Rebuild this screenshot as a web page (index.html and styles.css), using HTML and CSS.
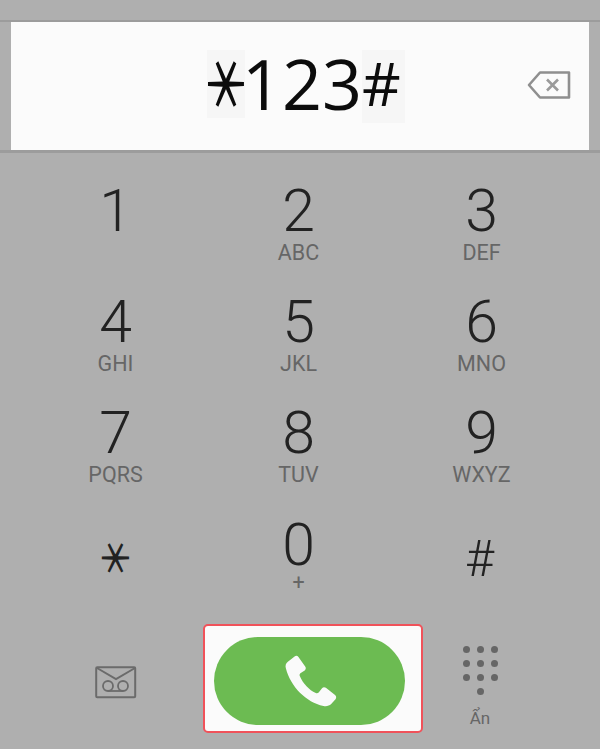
FILE: index.html
```html
<!DOCTYPE html>
<html lang="en">
<head>
    <meta charset="UTF-8">
    <meta name="viewport" content="width=device-width, initial-scale=1.0">
    <title>Dialer</title>
    <link rel="stylesheet" href="styles.css">
</head>
<body>
    <div class="display">
        <div class="number"><span class="symbol star"><span class="star-glyph">＊</span></span><span class="typed">123</span><span class="symbol hash">#</span></div>
        <svg class="backspace" viewBox="0 0 44 28" width="44" height="28">
            <path d="M13 1.500H42V26.500H13L2 14Z" fill="none" stroke="#8f8f8f" stroke-width="2.600" stroke-linejoin="round"/>
            <path d="M20 8.500L31 19.500M31 8.500L20 19.500" fill="none" stroke="#9a9a9a" stroke-width="2.600"/>
        </svg>
    </div>

    <div class="keypad">
        <div class="key"><span class="digit">1</span></div>
        <div class="key"><span class="digit">2</span><span class="letters">ABC</span></div>
        <div class="key"><span class="digit">3</span><span class="letters">DEF</span></div>
        <div class="key"><span class="digit">4</span><span class="letters">GHI</span></div>
        <div class="key"><span class="digit">5</span><span class="letters">JKL</span></div>
        <div class="key"><span class="digit">6</span><span class="letters">MNO</span></div>
        <div class="key"><span class="digit">7</span><span class="letters">PQRS</span></div>
        <div class="key"><span class="digit">8</span><span class="letters">TUV</span></div>
        <div class="key"><span class="digit">9</span><span class="letters">WXYZ</span></div>
        <div class="key"><span class="digit sym-star"><span class="star-glyph">＊</span></span></div>
        <div class="key"><span class="digit zero">0</span><span class="letters">+</span></div>
        <div class="key"><span class="digit sym-hash">#</span></div>
    </div>

    <div class="actions">
        <div class="voicemail">
            <svg viewBox="0 0 42 33" width="42" height="33">
                <rect x="1.200" y="1.200" width="39" height="30" rx="1" fill="none" stroke="#6b6b6b" stroke-width="2"/>
                <path d="M2 2L21 13L40 2" fill="none" stroke="#6b6b6b" stroke-width="2"/>
                <circle cx="13" cy="20" r="5" fill="none" stroke="#6b6b6b" stroke-width="1.800"/>
                <circle cx="28" cy="20" r="5" fill="none" stroke="#6b6b6b" stroke-width="1.800"/>
                <path d="M13 25H28" stroke="#6b6b6b" stroke-width="1.800"/>
            </svg>
        </div>
        <div class="call-box">
            <div class="call-pill">
                <svg viewBox="0 0 56 54" width="54" height="52">
                    <path fill="#fafafa" d="M3 14C2 11 3 8.500 5 7L12 1.500C13.500 .5 15 .8 16 2L23 12C24 13.500 23.800 15 22.500 16L18 19C17 20 17 21 17.500 22C21 30 27 36 34 39.500C35 40 36 40 37 39L40.500 34.500C41.500 33.300 43 33 44.500 34L54 41.500C55.500 42.800 55.500 44.500 54.500 46L50 51C48 53 45 53.500 42 53C24 49 8 33 3 14Z"/>
                </svg>
            </div>
        </div>
        <div class="hide-pad">
            <div class="dots">
                <i></i><i></i><i></i>
                <i></i><i></i><i></i>
                <i></i><i></i><i></i>
                <i class="last"></i>
            </div>
            <span class="hide-label">Ẩn</span>
        </div>
    </div>
</body>
</html>
```

FILE: styles.css
```css
:root {
    --panel: #afafaf;
    --white: #fbfbfb;
    --ink: #222222;
    --soft: #666666;
}

* {
    box-sizing: border-box;
}

html,
body {
    height: 749px;
}

body {
    margin: 0;
    padding: 0;
    overflow: hidden;
    background: var(--panel);
    font-family: Roboto, "Noto Sans", sans-serif;
}

.display {
    position: relative;
    height: 133px;
    margin-top: 20px;
    padding: 0 11px 0 11px;
    border-top: 2px solid #9c9c9c;
    border-bottom: 3px solid #9c9c9c;
    display: flex;
}

.number {
    flex: 1;
    background: var(--white);
    display: flex;
    justify-content: center;
    align-items: flex-start;
    padding: 28px 0 0 12px;
    font-family: "Open Sans", sans-serif;
    color: #0c0c0c;
}

.typed {
    font-size: 70px;
    line-height: 66px;
    margin-left: -3px;
}

.symbol {
    background: #f6f6f6;
    text-align: center;
}

.star {
    width: 38px;
    height: 68px;
    display: flex;
    justify-content: center;
    align-items: center;
}

/* fullwidth asterisk turned on its side gives the dialer's flat-barred star */
.star-glyph {
    display: block;
    flex: none;
    font-family: "Noto Sans CJK SC", sans-serif;
    font-weight: 500;
    font-size: 52px;
    line-height: 1;
    transform: translate(2px, 0) scale(0.9, 1.25) rotate(90deg);
}

.hash {
    width: 43px;
    height: 73px;
    font-size: 60px;
    line-height: 66px;
    padding-right: 5px;
}

.backspace {
    position: absolute;
    right: 29px;
    top: 49px;
}

.keypad {
    display: grid;
    grid-template-columns: repeat(3, 183px);
    grid-auto-rows: 111px;
    padding: 24px 0 0 24px;
}

.key {
    display: flex;
    flex-direction: column;
    align-items: center;
}

.digit {
    font-weight: 300;
    font-size: 59px;
    line-height: 68px;
    color: var(--ink);
}

.letters {
    font-size: 21.500px;
    line-height: 20px;
    margin-top: -2px;
    color: var(--soft);
}

.zero {
    margin-top: 1px;
    margin-bottom: -4px;
}

.sym-star {
    display: flex;
    height: 84px;
    align-items: center;
}

.sym-star .star-glyph {
    font-size: 38px;
    transform: translate(2px, 6px) scale(0.93, 1.1) rotate(90deg);
}

.sym-hash {
    font-size: 50px;
    line-height: 98px;
    margin-right: 4px;
}

.actions {
    display: grid;
    grid-template-columns: 203px 220px 1fr;
    height: 109px;
    margin-top: 3px;
}

.voicemail {
    display: flex;
    justify-content: center;
    align-items: center;
    padding: 7px 0 0 28px;
}

.call-box {
    border: 2px solid #f0525a;
    border-radius: 5px;
    background: var(--white);
    padding: 11px 16px 6px 9px;
}

.call-pill {
    height: 100%;
    border-radius: 44px;
    background: #6cbb52;
    display: flex;
    justify-content: center;
    align-items: center;
}

.hide-pad {
    display: flex;
    flex-direction: column;
    align-items: center;
    padding-top: 22px;
    width: 114px;
}

.dots {
    display: grid;
    grid-template-columns: repeat(3, 7px);
    grid-auto-rows: 7px;
    gap: 7px;
}

.dots i {
    border-radius: 50%;
    background: #666666;
}

.dots .last {
    grid-column: 2;
}

.hide-label {
    font-size: 17px;
    line-height: 20px;
    margin-top: 13px;
    color: var(--soft);
}
```
